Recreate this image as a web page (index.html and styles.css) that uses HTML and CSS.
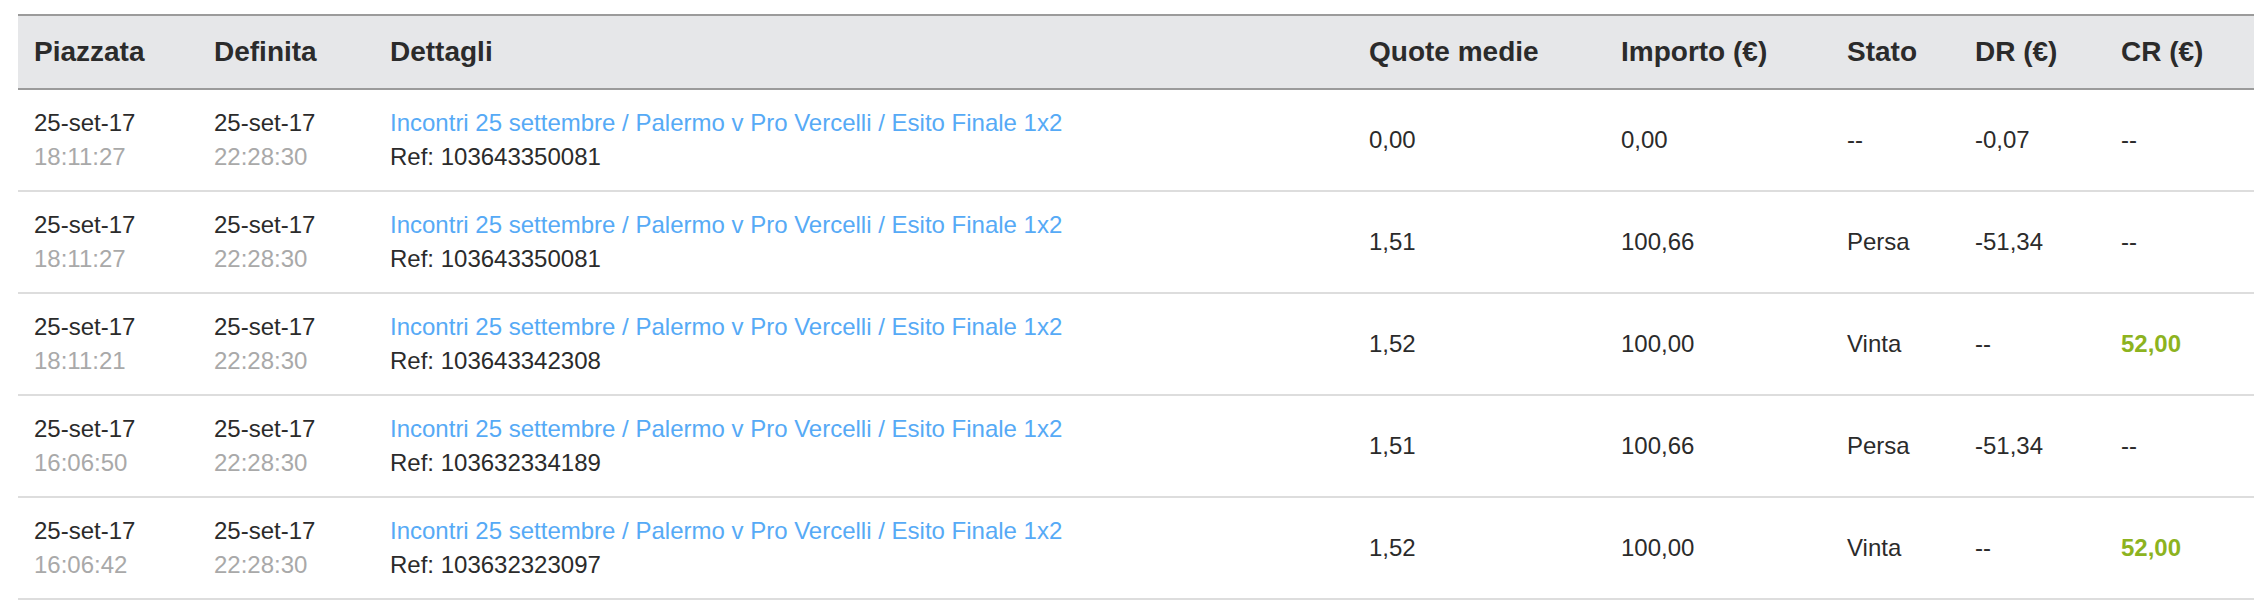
FILE: index.html
```html
<!DOCTYPE html>
<html lang="it">
<head>
<meta charset="utf-8">
<title>Scommesse</title>
<link rel="stylesheet" href="styles.css">
</head>
<body>
<div class="wrap">
<table class="bets">
  <colgroup>
    <col class="c-placed"><col class="c-settled"><col class="c-details"><col class="c-odds"><col class="c-stake"><col class="c-status"><col class="c-dr"><col class="c-cr">
  </colgroup>
  <thead>
    <tr>
      <th>Piazzata</th><th>Definita</th><th>Dettagli</th><th>Quote medie</th><th>Importo (€)</th><th>Stato</th><th>DR (€)</th><th>CR (€)</th>
    </tr>
  </thead>
  <tbody>
    <tr>
      <td><div>25-set-17</div><div class="time">18:11:27</div></td>
      <td><div>25-set-17</div><div class="time">22:28:30</div></td>
      <td><a class="link" href="#">Incontri 25 settembre / Palermo v Pro Vercelli / Esito Finale 1x2</a><div>Ref: 103643350081</div></td>
      <td>0,00</td><td>0,00</td><td>--</td><td>-0,07</td><td>--</td>
    </tr>
    <tr>
      <td><div>25-set-17</div><div class="time">18:11:27</div></td>
      <td><div>25-set-17</div><div class="time">22:28:30</div></td>
      <td><a class="link" href="#">Incontri 25 settembre / Palermo v Pro Vercelli / Esito Finale 1x2</a><div>Ref: 103643350081</div></td>
      <td>1,51</td><td>100,66</td><td>Persa</td><td>-51,34</td><td>--</td>
    </tr>
    <tr>
      <td><div>25-set-17</div><div class="time">18:11:21</div></td>
      <td><div>25-set-17</div><div class="time">22:28:30</div></td>
      <td><a class="link" href="#">Incontri 25 settembre / Palermo v Pro Vercelli / Esito Finale 1x2</a><div>Ref: 103643342308</div></td>
      <td>1,52</td><td>100,00</td><td>Vinta</td><td>--</td><td class="win">52,00</td>
    </tr>
    <tr>
      <td><div>25-set-17</div><div class="time">16:06:50</div></td>
      <td><div>25-set-17</div><div class="time">22:28:30</div></td>
      <td><a class="link" href="#">Incontri 25 settembre / Palermo v Pro Vercelli / Esito Finale 1x2</a><div>Ref: 103632334189</div></td>
      <td>1,51</td><td>100,66</td><td>Persa</td><td>-51,34</td><td>--</td>
    </tr>
    <tr>
      <td><div>25-set-17</div><div class="time">16:06:42</div></td>
      <td><div>25-set-17</div><div class="time">22:28:30</div></td>
      <td><a class="link" href="#">Incontri 25 settembre / Palermo v Pro Vercelli / Esito Finale 1x2</a><div>Ref: 103632323097</div></td>
      <td>1,52</td><td>100,00</td><td>Vinta</td><td>--</td><td class="win">52,00</td>
    </tr>
  </tbody>
</table>
</div>
</body>
</html>
```

FILE: styles.css
```css
html, body {
  margin: 0;
  padding: 0;
  background: #fff;
  overflow: hidden;
}
.wrap {
  padding: 14px 0 0 18px;
  overflow: hidden;
}
.bets {
  border-collapse: collapse;
  table-layout: fixed;
  width: 2287px;
  font-family: "Liberation Sans", Arial, Helvetica, sans-serif;
  color: #2b2b2b;
}
.c-placed { width: 180px; }
.c-settled { width: 176px; }
.c-details { width: 979px; }
.c-odds { width: 252px; }
.c-stake { width: 226px; }
.c-status { width: 128px; }
.c-dr { width: 146px; }
.c-cr { width: 200px; }

.bets th {
  background: #e6e7e9;
  border-top: 2px solid #9b9b9b;
  border-bottom: 2px solid #9b9b9b;
  padding: 16px 16px;
  font-size: 28px;
  line-height: 40px;
  font-weight: bold;
  text-align: left;
  color: #2b2b2b;
  white-space: nowrap;
}
.bets td {
  border-bottom: 2px solid #dddddd;
  padding: 16px 16px;
  font-size: 24px;
  line-height: 34px;
  vertical-align: middle;
  white-space: nowrap;
}
.time {
  color: #a9a9a9;
}
.link {
  display: block;
  color: #56aaf6;
  text-decoration: none;
}
.win {
  color: #8db31f;
  font-weight: bold;
}
```
